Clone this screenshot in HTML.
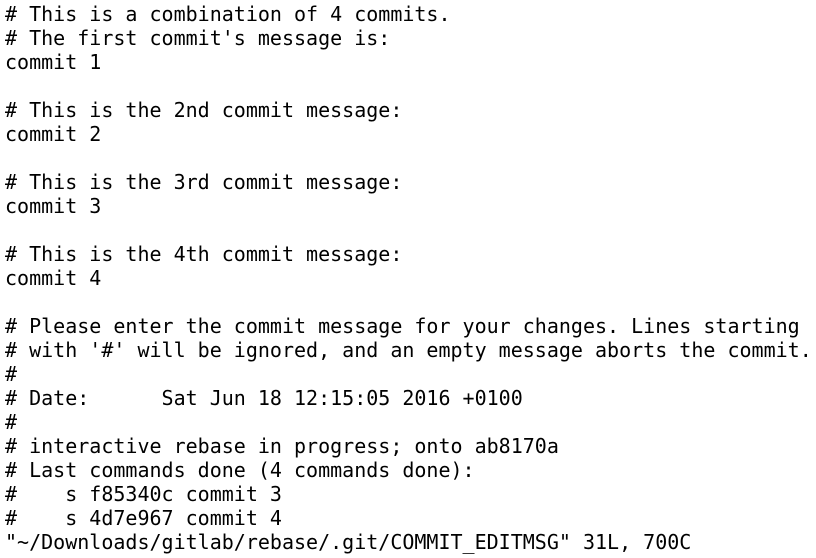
<!DOCTYPE html>
<html><head><style>
html,body{margin:0;background:#fff;width:816px;height:558px;overflow:hidden}
pre{margin:0;padding:2px 0 0 5px;font-family:"DejaVu Sans Mono","Liberation Mono",monospace;font-size:20px;line-height:24px;color:#000}
</style></head><body><pre># This is a combination of 4 commits.
# The first commit's message is:
commit 1

# This is the 2nd commit message:
commit 2

# This is the 3rd commit message:
commit 3

# This is the 4th commit message:
commit 4

# Please enter the commit message for your changes. Lines starting
# with '#' will be ignored, and an empty message aborts the commit.
#
# Date:      Sat Jun 18 12:15:05 2016 +0100
#
# interactive rebase in progress; onto ab8170a
# Last commands done (4 commands done):
#    s f85340c commit 3
#    s 4d7e967 commit 4
"~/Downloads/gitlab/rebase/.git/COMMIT_EDITMSG" 31L, 700C</pre></body></html>
